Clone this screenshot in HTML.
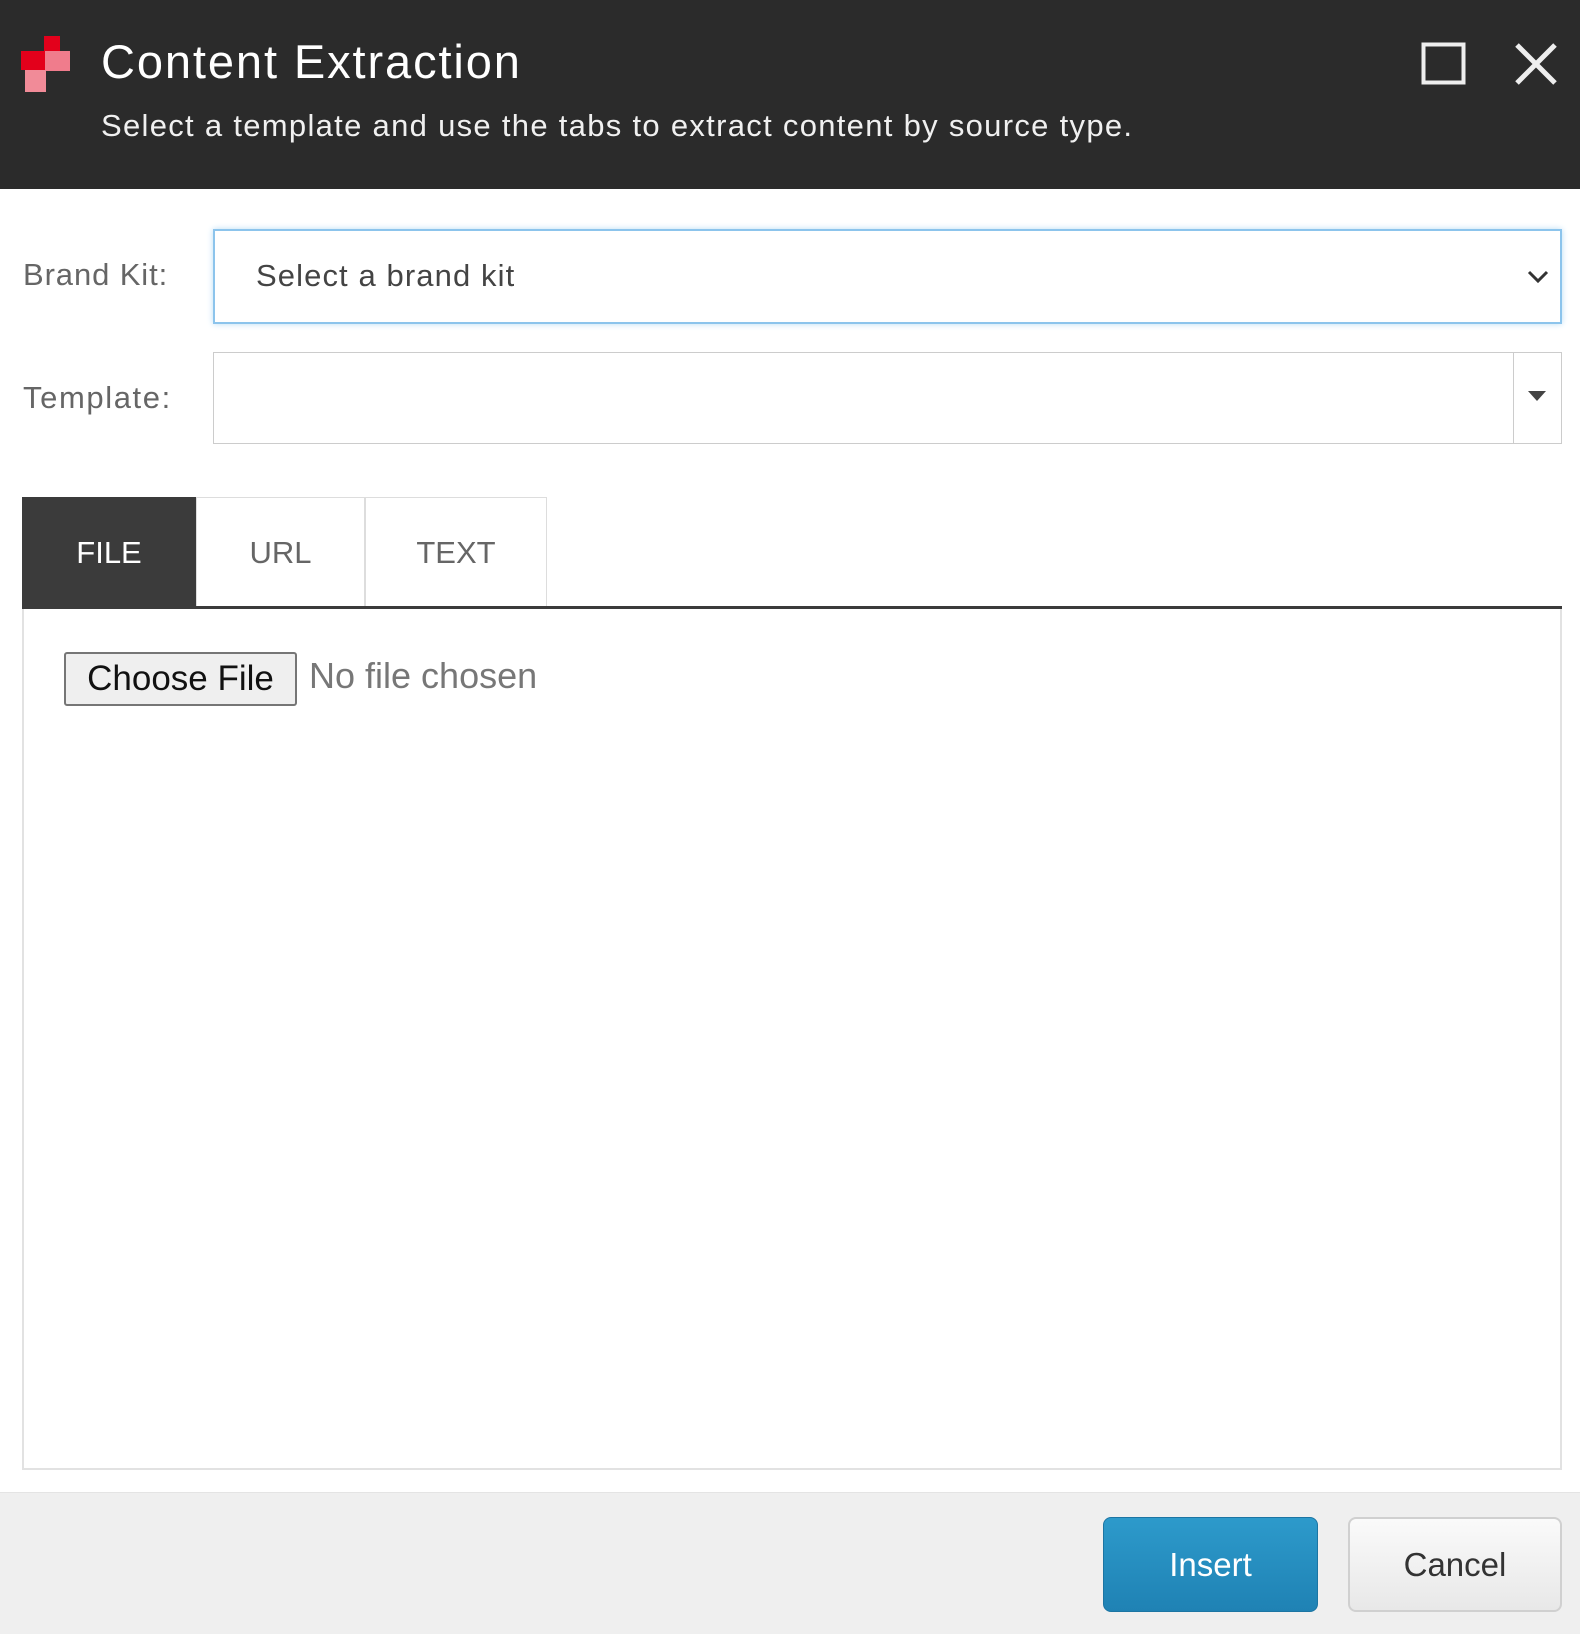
<!DOCTYPE html>
<html><head><meta charset="utf-8"><style>
*{box-sizing:border-box;margin:0;padding:0}
body{width:1580px;height:1634px;position:relative;background:#fff;font-family:"Liberation Sans",sans-serif;overflow:hidden}
.hdr{position:absolute;left:0;top:0;width:1580px;height:189px;background:#2b2b2b}
.t{position:absolute;left:101px;top:34px;font-size:47px;color:#fff;letter-spacing:1.9px}
.st{position:absolute;left:101px;top:108px;font-size:31px;color:#f0f0f0;letter-spacing:1.3px}
.lbl{position:absolute;left:23px;font-size:31px;color:#666}
.box{position:absolute;left:213px;width:1349px;background:#fff}
.tab{position:absolute;top:497px;height:111px;font-size:31px;color:#666;display:flex;align-items:center;justify-content:center;border:1px solid #ddd;border-bottom:none}
.btn{position:absolute;top:1517px;height:95px;border-radius:8px;font-size:33px;display:flex;align-items:center;justify-content:center}
</style></head><body>
<div class="hdr">
<svg style="position:absolute;left:21px;top:36px" width="50" height="60" viewBox="0 0 50 60">
<rect x="23" y="0" width="16" height="15" fill="#e3001b"/>
<rect x="0" y="15" width="24" height="19" fill="#e3001b"/>
<rect x="24" y="15" width="25" height="20" fill="#f07c8c"/>
<rect x="4" y="34" width="21" height="22" fill="#f18b98"/>
</svg>
<div class="t">Content Extraction</div>
<div class="st">Select a template and use the tabs to extract content by source type.</div>
<svg style="position:absolute;left:1421px;top:42px" width="46" height="44"><rect x="2.5" y="2.5" width="40" height="38" fill="none" stroke="#eee" stroke-width="4"/></svg>
<svg style="position:absolute;left:1513px;top:41px" width="46" height="46"><path d="M4 4L42 42M42 4L4 42" stroke="#eee" stroke-width="5"/></svg>
</div>
<div class="lbl" style="top:257px;letter-spacing:0.9px">Brand Kit:</div>
<div class="box" style="top:229px;height:95px;border:2px solid #8cc4ec;box-shadow:0 0 6px #b8dcf5"></div>
<div style="position:absolute;left:256px;top:258px;font-size:31px;color:#444;letter-spacing:1.1px">Select a brand kit</div>
<svg style="position:absolute;left:1527px;top:270px" width="22" height="14"><path d="M2 2L11 11L20 2" fill="none" stroke="#333" stroke-width="3"/></svg>
<div class="lbl" style="top:380px;letter-spacing:1.6px">Template:</div>
<div class="box" style="top:352px;height:92px;border:1px solid #ccc"></div>
<div style="position:absolute;left:1513px;top:353px;width:1px;height:90px;background:#ccc"></div>
<svg style="position:absolute;left:1528px;top:391px" width="18" height="11"><path d="M0 0H18L9 10Z" fill="#444"/></svg>
<div class="tab" style="left:22px;width:174px;background:#3b3b3b;color:#fff;border-color:#3b3b3b">FILE</div>
<div class="tab" style="left:196px;width:169px">URL</div>
<div class="tab" style="left:365px;width:182px">TEXT</div>
<div style="position:absolute;left:22px;top:606px;width:1540px;height:3px;background:#3b3b3b"></div>
<div style="position:absolute;left:22px;top:609px;width:1540px;height:861px;border:2px solid #e2e2e2;border-top:none"></div>
<div style="position:absolute;left:64px;top:652px;width:233px;height:54px;background:#efefef;border:2px solid #767676;border-radius:3px;font-size:35px;color:#111;display:flex;align-items:center;justify-content:center">Choose File</div>
<div style="position:absolute;left:309px;top:655px;font-size:36px;color:#777">No file chosen</div>
<div style="position:absolute;left:0;top:1492px;width:1580px;height:142px;background:#efefef;border-top:1px solid #e4e4e4"></div>
<div class="btn" style="left:1103px;width:215px;background:linear-gradient(#2d9acb,#1f82b4);border:1px solid #1c75a3;color:#fff">Insert</div>
<div class="btn" style="left:1348px;width:214px;background:linear-gradient(#fafafa,#e8e8e8);border:2px solid #d0d0d0;color:#333">Cancel</div>
</body></html>
